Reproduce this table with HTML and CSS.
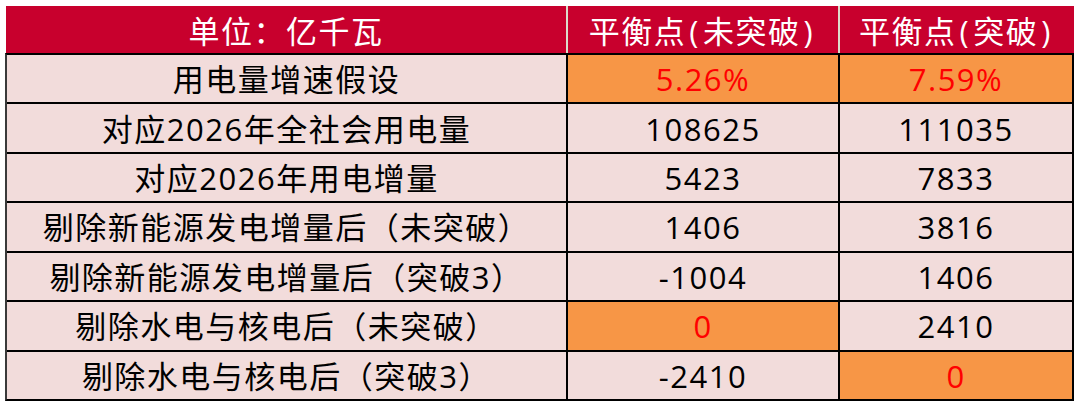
FILE: index.html
```html
<!DOCTYPE html>
<html lang="zh-CN">
<head>
<meta charset="utf-8">
<title>平衡点</title>
<link rel="stylesheet" href="styles.css">
</head>
<body>
<div class="sheet">
  <div class="head">
    <div class="hcell">单位：亿千瓦</div>
    <div class="hcell">平衡点<span class="paren">(</span>未突破<span class="paren">)</span></div>
    <div class="hcell">平衡点<span class="paren">(</span>突破<span class="paren">)</span></div>
  </div>
  <div class="grid">
    <div class="cell">用电量增速假设</div>
    <div class="cell hl">5.26%</div>
    <div class="cell hl">7.59%</div>

    <div class="cell">对应2026年全社会用电量</div>
    <div class="cell">108625</div>
    <div class="cell">111035</div>

    <div class="cell">对应2026年用电增量</div>
    <div class="cell">5423</div>
    <div class="cell">7833</div>

    <div class="cell">剔除新能源发电增量后（未突破）</div>
    <div class="cell">1406</div>
    <div class="cell">3816</div>

    <div class="cell">剔除新能源发电增量后（突破3）</div>
    <div class="cell">-1004</div>
    <div class="cell">1406</div>

    <div class="cell">剔除水电与核电后（未突破）</div>
    <div class="cell hl">0</div>
    <div class="cell">2410</div>

    <div class="cell">剔除水电与核电后（突破3）</div>
    <div class="cell">-2410</div>
    <div class="cell hl">0</div>
  </div>
</div>
</body>
</html>
```

FILE: styles.css
```css
html, body {
  margin: 0;
  padding: 0;
  background: #ffffff;
}

body {
  font-family: "Open Sans", "Noto Sans CJK SC", sans-serif;
  font-size: 31px;
  letter-spacing: 1.5px;
  color: #000;
}

.sheet {
  padding: 6px 0 0 5px;
  width: 1069px;
}

.head {
  display: grid;
  grid-template-columns: 560px 270px 234px;
  column-gap: 2px;
  height: 47px;
  margin-left: 1px;
  background: #dcdccb;
}

.hcell {
  background: #c8002d;
  color: #ffffff;
  display: flex;
  align-items: center;
  justify-content: center;
  padding-top: 3px;
  line-height: 1;
  white-space: nowrap;
}

.paren {
  margin: 0 3px;
}

.grid {
  display: grid;
  grid-template-columns: 559px 270px 232px;
  grid-template-rows: repeat(7, 1fr);
  gap: 2px;
  height: 344px;
  background: #000;
  border-top: 2px solid #000;
  border-right: 2px solid #000;
  border-bottom: 2px solid #000;
  border-left: 2px solid #3a3a3a;
}

.cell {
  background: #f2dcdb;
  display: flex;
  align-items: center;
  justify-content: center;
  padding-top: 2px;
  line-height: 1;
  white-space: nowrap;
}

.cell.hl {
  background: #f79646;
  color: #ff0000;
}
```
